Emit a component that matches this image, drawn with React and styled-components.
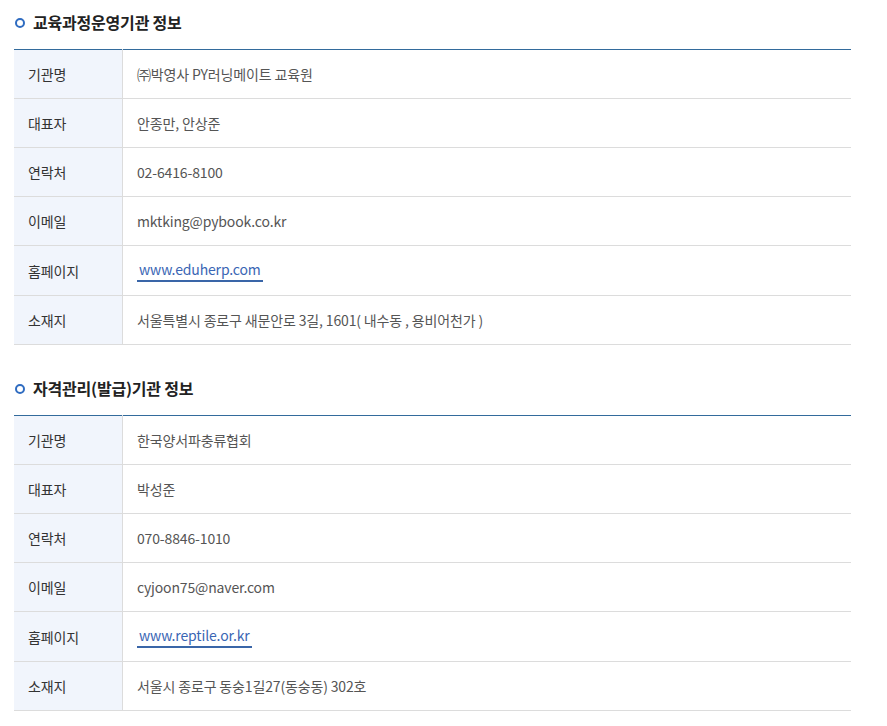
import React from 'react'
import styled, { createGlobalStyle } from 'styled-components'

const GlobalStyle = createGlobalStyle`
  body {
    margin: 0;
    background: #fff;
    font-family: 'Noto Sans CJK KR', 'Noto Sans', sans-serif;
  }
`

const sections = [
  {
    title: '교육과정운영기관 정보',
    rows: [
      { label: '기관명', value: '㈜박영사 PY러닝메이트 교육원' },
      { label: '대표자', value: '안종만, 안상준' },
      { label: '연락처', value: '02-6416-8100' },
      { label: '이메일', value: 'mktking@pybook.co.kr' },
      { label: '홈페이지', value: 'www.eduherp.com', link: true },
      { label: '소재지', value: '서울특별시 종로구 새문안로 3길, 1601( 내수동 , 용비어천가 )' },
    ],
  },
  {
    title: '자격관리(발급)기관 정보',
    rows: [
      { label: '기관명', value: '한국양서파충류협회' },
      { label: '대표자', value: '박성준' },
      { label: '연락처', value: '070-8846-1010' },
      { label: '이메일', value: 'cyjoon75@naver.com' },
      { label: '홈페이지', value: 'www.reptile.or.kr', link: true },
      { label: '소재지', value: '서울시 종로구 동숭1길27(동숭동) 302호' },
    ],
  },
]

const App = () => {
  return (
    <Wrapper>
      <GlobalStyle />
      {sections.map((section) => (
        <Section key={section.title}>
          <Title>
            <Dot />
            {section.title}
          </Title>
          <Table>
            <tbody>
              {section.rows.map((row) => (
                <Row key={row.label} $link={row.link}>
                  <Label>{row.label}</Label>
                  <Value>
                    {row.link ? <Link href='#'>{row.value}</Link> : row.value}
                  </Value>
                </Row>
              ))}
            </tbody>
          </Table>
        </Section>
      ))}
    </Wrapper>
  )
}

const Wrapper = styled.div`
  width: 837px;
  padding: 10px 0 0 14px;
`

const Section = styled.section`
  margin-bottom: 31px;
`

const Title = styled.h3`
  display: flex;
  align-items: center;
  gap: 8px;
  margin: 0 0 15px;
  height: 24px;
  font-size: 16px;
  font-weight: 700;
  color: #222;
  letter-spacing: -0.2px;
`

const Dot = styled.span`
  box-sizing: border-box;
  flex-shrink: 0;
  width: 10px;
  height: 10px;
  margin: 1px 0 0 1px;
  border: 2.5px solid #2f6cc1;
  border-radius: 50%;
`

const Table = styled.table`
  width: 100%;
  border-collapse: collapse;
  border-top: 1px solid #336b9c;
  font-size: 14px;
  letter-spacing: -0.15px;
`

const Row = styled.tr`
  height: ${(p) => (p.$link ? '50px' : '49px')};
  border-bottom: 1px solid #dcdcdc;
`

const Label = styled.th`
  width: 94px;
  padding: 0 0 0 14px;
  background: #f1f5fc;
  border-right: 1px solid #dcdcdc;
  text-align: left;
  font-weight: 400;
  color: #333;
`

const Value = styled.td`
  padding: 0 14px;
  color: #555;
`

const Link = styled.a`
  display: inline-block;
  padding: 0 2px 1px;
  border-bottom: 2px solid #3a66a8;
  color: #3a66b4;
  text-decoration: none;
`

export default App
